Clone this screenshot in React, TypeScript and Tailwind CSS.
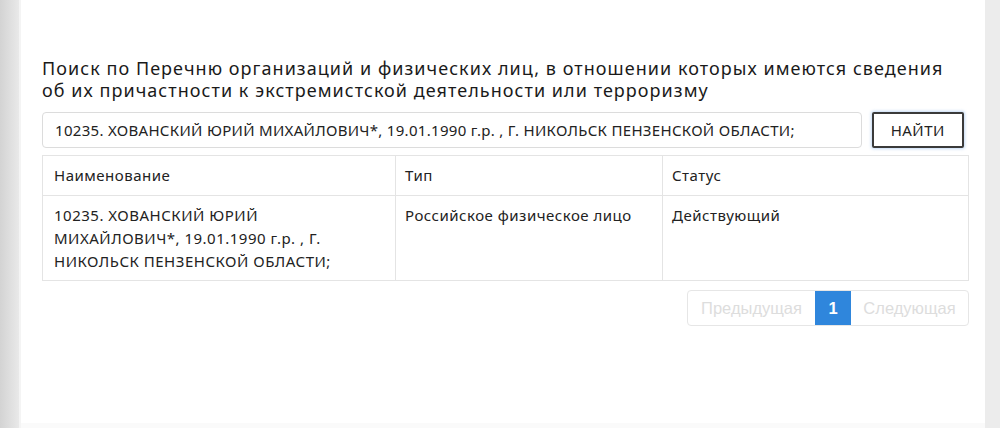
import React from "react"

const font = { fontFamily: '"Noto Sans", "Open Sans", sans-serif' }

export default function App() {
  const query =
    "10235. ХОВАНСКИЙ ЮРИЙ МИХАЙЛОВИЧ*, 19.01.1990 г.р. , Г. НИКОЛЬСК ПЕНЗЕНСКОЙ ОБЛАСТИ;"
  return (
    <div className="flex h-[428px] w-[1000px] overflow-hidden bg-[#ececec]" style={font}>
      {/* left gutter */}
      <div className="w-[19px] shrink-0 bg-gradient-to-r from-[#d3d3d3] to-[#e9e9e9]" />
      <div className="w-[2px] shrink-0 bg-[#f4f4f4]" />
      <div className="flex w-[964px] shrink-0 flex-col bg-white">
        <div className="flex-1 px-[21px] pt-[57px]">
          <h1 className="text-[18px] leading-[22px] tracking-[1.05px] text-[#1a1a1a]">
            Поиск по Перечню организаций и физических лиц, в отношении которых имеются сведения
            об их причастности к экстремистской деятельности или терроризму
          </h1>

          <div className="mt-[11px] flex gap-[10px]">
            <div className="flex h-[36px] w-[824px] items-center whitespace-nowrap rounded-[4px] border border-[#dcdcdc] px-[12px] text-[15px] tracking-[0.3px] text-[#222]">
              {query}
            </div>
            <button className="flex h-[36px] w-[93px] items-center justify-center rounded-[2px] border-2 border-[#3a3a3a] text-[15px] tracking-[0.5px] text-[#222] shadow-[0_0_3px_1px_rgba(120,170,230,0.45)]">
              НАЙТИ
            </button>
          </div>

          <table className="mt-[7px] w-[927px] table-fixed border-collapse text-[15px] tracking-[0.5px] text-[#222]">
            <colgroup>
              <col className="w-[353px]" />
              <col className="w-[267px]" />
              <col />
            </colgroup>
            <thead>
              <tr className="h-[40px]">
                <th className="border border-[#e4e4e4] px-[11px] text-left font-normal">Наименование</th>
                <th className="border border-[#e4e4e4] px-[9px] text-left font-normal">Тип</th>
                <th className="border border-[#e4e4e4] px-[9px] text-left font-normal">Статус</th>
              </tr>
            </thead>
            <tbody>
              <tr className="h-[85px] align-top">
                <td className="border border-[#e4e4e4] px-[11px] pt-[8px] leading-[23px]">
                  10235. ХОВАНСКИЙ ЮРИЙ МИХАЙЛОВИЧ*, 19.01.1990 г.р. , Г. НИКОЛЬСК ПЕНЗЕНСКОЙ ОБЛАСТИ;
                </td>
                <td className="border border-[#e4e4e4] px-[9px] pt-[8px] leading-[23px]">
                  Российское физическое лицо
                </td>
                <td className="border border-[#e4e4e4] px-[9px] pt-[8px] leading-[23px]">Действующий</td>
              </tr>
            </tbody>
          </table>

          <div className="mt-[9px] flex w-[927px] justify-end" style={{ fontFamily: '"Liberation Sans", Arial, sans-serif' }}>
            <div className="flex h-[36px] overflow-hidden rounded-[4px] border border-[#e6e6e6] text-[16.5px]">
              <span className="flex w-[127px] items-center justify-center text-[#dddddd]">Предыдущая</span>
              <span className="flex w-[36px] items-center justify-center bg-[#2f86dc] font-bold text-white">1</span>
              <span className="flex w-[117px] items-center justify-center text-[#dddddd]">Следующая</span>
            </div>
          </div>
        </div>
        <div className="h-[5px] bg-[#fafafa]" />
      </div>
    </div>
  )
}
